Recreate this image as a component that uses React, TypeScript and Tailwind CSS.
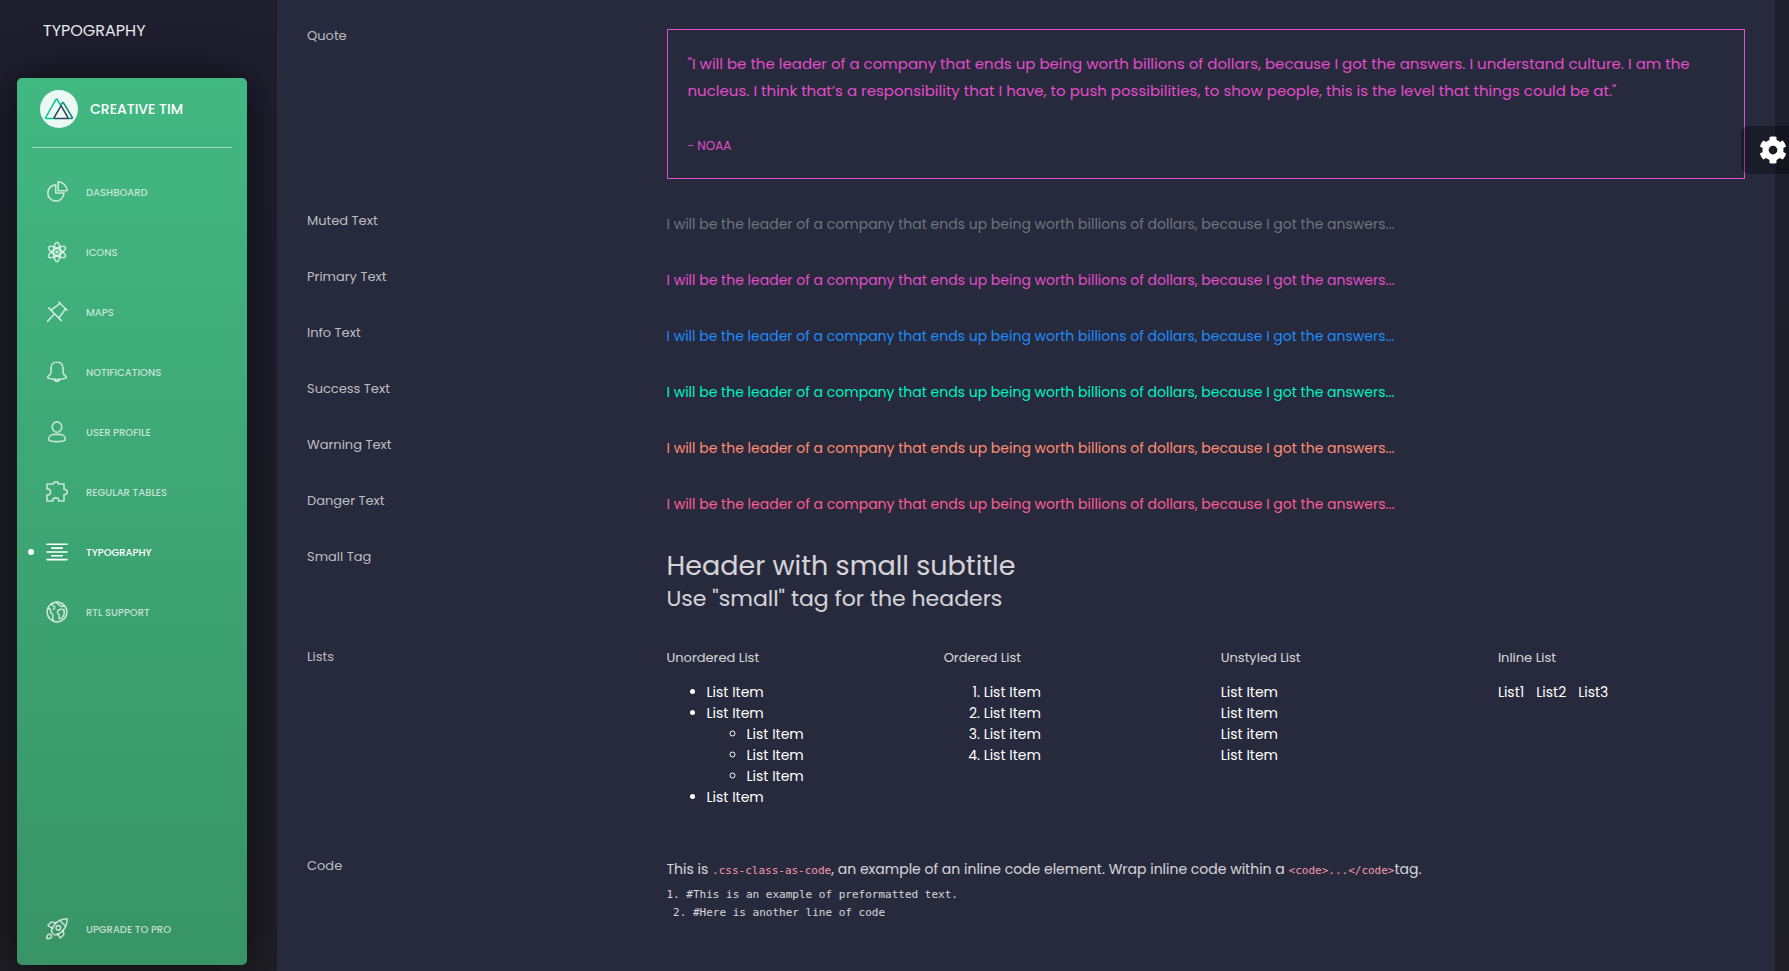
import type { ReactNode } from "react";
import clsx from "clsx";
import { FaCog } from "react-icons/fa";

const sample =
  "I will be the leader of a company that ends up being worth billions of dollars, because I got the answers...";

const icons: Record<string, ReactNode> = {
  dashboard: (
    <>
      <path d="M9.7 3.9A8.1 8.1 0 1 0 18 12H9.7Z" />
      <path d="M12.1.9v8.8h9A9 9 0 0 0 12.1.9Z" />
    </>
  ),
  atom: (
    <>
      <ellipse cx="11" cy="11" rx="3.5" ry="9.6" />
      <ellipse cx="11" cy="11" rx="3.5" ry="9.6" transform="rotate(60 11 11)" />
      <ellipse cx="11" cy="11" rx="3.5" ry="9.6" transform="rotate(-60 11 11)" />
      <circle cx="11" cy="11" r="1" />
    </>
  ),
  pin: (
    <>
      <path d="M12.7 1 21 9.2" />
      <path d="M14.2 2.4 5.2 9M19.5 7.8 12.9 17" />
      <path d="M2.6 6.8 15.3 19.6" />
      <path d="M8.4 13 1.6 20.4" />
    </>
  ),
  bell: (
    <>
      <path d="M11 1C7.2 1 5 3.7 5 7.2v3.6c0 2.3-.9 3.2-2.7 4.4-.9.6-.8 1.6.3 2 4.7 1.6 12.1 1.6 16.8 0 1.1-.4 1.2-1.4.3-2-1.8-1.2-2.7-2.1-2.7-4.4V7.2C17 3.7 14.8 1 11 1Z" />
      <path d="M8.5 18.4c.3 1.4 1.3 2.1 2.5 2.1s2.2-.7 2.5-2.1" />
    </>
  ),
  user: (
    <>
      <ellipse cx="11" cy="6.1" rx="4.8" ry="5.2" />
      <path d="M2.8 18.3c0-3 2.3-4.9 5.2-4.9h6c2.9 0 5.2 1.9 5.2 4.9 0 .8-.4 1.2-1.1 1.4-3.9 1-10.3 1-14.2 0-.7-.2-1.100-.6-1.100-1.400Z" />
    </>
  ),
  puzzle: (
    <path
      strokeLinejoin="miter"
      d="M1 3h6.500c0-1.300 1-2.300 2.500-2.300S12.500 1.700 12.500 3H18v5.200c2 0 3.200 1.200 3.200 2.800S20 13.800 18 13.800V20h-5.100c0-1.900-1.300-3.100-3.100-3.100S6.700 18.100 6.700 20H1v-5.900c2.100 0 3.500-1.300 3.500-3.100S3.100 7.900 1 7.900Z"
    />
  ),
  align: <path d="M1 3.300h20M5.700 7.100h10.600M1 11h20M5.700 14.800h10.600M1 18.600h20" />,
  world: (
    <>
      <circle cx="11" cy="11" r="9.900" />
      <path d="M2 7.200c1.900.2 3 1.300 2.600 2.700-.4 1.500.4 2.100 1.500 2.700 1.200.7.900 2.200.6 3.500-.2 1 .3 2.200.4 3.800" />
      <path d="M5.600 2.800c.1 1.500 1.200 2 2.400 2.400 1.200.5.700 2.200-.5 3.100" />
      <path d="M10.500 1.200c.2 1.400 1.200 2 2.400 2.500 1.100.5 1.500 2.100 3.200 1.700l2-.5" />
      <path d="M17.900 8.700c-2.200-1-5.700-.5-6.400 1.800-.5 1.600.7 2.500 1.500 3.300.7.800-.5 2.400.2 3.600.8 1.300 3-.3 3.600-1.700.5-1.100 1.100-1.500 1.300-2.800.2-1.500.1-3.100-.2-4.200Z" />
    </>
  ),
  rocket: (
    <>
      <path d="M21.200.8c-5.100.2-9.400 1.800-12.200 5.200-1.900 2.300-2.900 4.500-3.500 6.400-.5 1.800 2.700 5 4.500 4.500 2.100-.6 4.500-1.700 6.500-3.800 3.300-3.400 4.700-7.200 4.700-12.300Z" />
      <path d="M9.700 4.800 5.300 4 2 7.300l4.300 3M17.200 12.300l.6 4.400-3.400 3.300-2.900-4" />
      <circle cx="12.300" cy="9.800" r="2.300" />
      <path d="M.9 20.800c-.1-2 .2-4.300 2.100-4.600 1.600-.2 2.800 1 2.600 2.500-.3 1.900-2.500 2.200-4.700 2.100Z" />
      <path d="M14.600 3.200 18.900 7.500" />
    </>
  ),
};

const links = [
  { name: "Dashboard", icon: "dashboard" },
  { name: "Icons", icon: "atom" },
  { name: "Maps", icon: "pin" },
  { name: "Notifications", icon: "bell" },
  { name: "User Profile", icon: "user" },
  { name: "Regular Tables", icon: "puzzle" },
  { name: "Typography", icon: "align", active: true },
  { name: "RTL Support", icon: "world" },
];

const colorRows = [
  { label: "Muted Text", className: "text-[#6c757d]" },
  { label: "Primary Text", className: "text-[#e14eca]" },
  { label: "Info Text", className: "text-[#1d8cf8]" },
  { label: "Success Text", className: "text-[#00f2c3]" },
  { label: "Warning Text", className: "text-[#ff8d72]" },
  { label: "Danger Text", className: "text-[#fd5d93]" },
];

function SidebarLink({
  name,
  icon,
  active,
}: {
  name: string;
  icon: string;
  active?: boolean;
}) {
  return (
    <a
      href="#"
      className={clsx(
        "relative flex h-[60px] items-center gap-[18px] pl-[29px] text-[10px] font-medium uppercase",
        active ? "text-white" : "text-white/70"
      )}
    >
      {active && (
        <span className="absolute left-[11px] size-1.5 rounded-full bg-white" />
      )}
      <svg
        className="size-[22px] shrink-0"
        viewBox="0 0 22 22"
        fill="none"
        stroke="currentColor"
        strokeWidth="1.6"
        strokeLinecap="round"
        strokeLinejoin="round"
        aria-hidden="true"
      >
        {icons[icon]}
      </svg>
      {name}
    </a>
  );
}

function Logo() {
  return (
    <svg className="size-[38px]" viewBox="0 0 38 38" fill="none" aria-hidden="true">
      <circle cx="19" cy="19" r="19" fill="#ebf8f3" />
      <g strokeWidth="1.5" strokeLinejoin="round" strokeLinecap="round">
        <path
          d="M14 28.6H6.300c-.6 0-.9-.6-.6-1.100L15.900 9.600c.4-.7 1-.7 1.400 0L20.800 15.700"
          stroke="#00c58e"
        />
        <path
          d="M28 28.600h3.700c.6 0 .9-.6.600-1.100L23.500 12.900c-.4-.7-1-.7-1.400 0L20.800 15.200"
          stroke="#108775"
        />
        <path
          d="M14.800 28.600h12.500c.6 0 .9-.6.600-1.100L21.600 16.700c-.3-.5-.8-.5-1.100 0L14.200 27.500c-.3.500 0 1.100.6 1.100Z"
          stroke="#2f495e"
        />
      </g>
    </svg>
  );
}

function Sidebar() {
  return (
    <div className="flex w-[277px] shrink-0 flex-col pr-[30px] pb-1.5 pl-[17px]">
      <header className="flex h-[78px] items-start pt-[19px] pl-[26px]">
        <a href="#" className="text-base leading-6 text-white/90 uppercase">
          Typography
        </a>
      </header>
      <aside className="flex flex-1 flex-col rounded-[5px] bg-linear-to-b from-[#42b883] to-[#389466] pt-3 pb-1.5 shadow-[0_0_45px_0_rgba(0,0,0,0.6)]">
        <a
          href="#"
          className="flex items-center gap-3 pl-[23px] text-sm font-medium text-white uppercase"
        >
          <Logo />
          Creative Tim
        </a>
        <hr className="mx-[15px] mt-[19px] mb-3.5 border-white/50" />
        <nav className="flex flex-1 flex-col">
          {links.map((link) => (
            <SidebarLink key={link.name} {...link} />
          ))}
          <div className="mt-auto">
            <SidebarLink name="Upgrade to Pro" icon="rocket" />
          </div>
        </nav>
      </aside>
    </div>
  );
}

function Row({ label, children }: { label: string; children: ReactNode }) {
  return (
    <div className="grid grid-cols-[1fr_3fr]">
      <p className="text-[13px] leading-[26px] text-white/70">{label}</p>
      <div className="min-w-0 pt-[5px]">{children}</div>
    </div>
  );
}

function ListColumn({ title, children }: { title: string; children: ReactNode }) {
  return (
    <div>
      <h5 className="mb-[15px] text-[13px] leading-[18px] text-white/80">{title}</h5>
      {children}
    </div>
  );
}

export default function App() {
  return (
    <div className="flex min-h-screen bg-linear-to-b from-[#1e1e2f] to-[#1e1e24] font-[Poppins,Inter,sans-serif]">
      <Sidebar />
      <main className="mr-3.5 flex flex-1 flex-col gap-[29px] bg-[#27293d] px-[30px] pt-[23px] pb-12">
        <Row label="Quote">
          <blockquote className="mt-px border border-[#e14eca] p-5 text-[#e14eca]">
            <p className="text-[15px] leading-[27px]">
              "I will be the leader of a company that ends up being worth
              billions of dollars, because I got the answers. I understand
              culture. I am the nucleus. I think that’s a responsibility that I
              have, to push possibilities, to show people, this is the level
              that things could be at."
            </p>
            <small className="mt-[30px] block text-xs leading-6">- NOAA</small>
          </blockquote>
        </Row>
        {colorRows.map((row) => (
          <Row key={row.label} label={row.label}>
            <p className={clsx("text-sm leading-[22px]", row.className)}>
              {sample}
            </p>
          </Row>
        ))}
        <Row label="Small Tag">
          <h2 className="text-[27px] leading-[34px] text-white/80">
            Header with small subtitle
            <small className="block text-[22px] leading-8">
              Use "small" tag for the headers
            </small>
          </h2>
        </Row>
        <Row label="Lists">
          <div className="mb-4 grid grid-cols-4 gap-x-[30px] text-sm leading-[21px] text-white">
            <ListColumn title="Unordered List">
              <ul className="list-disc pl-10">
                <li>List Item</li>
                <li>
                  List Item
                  <ul className="list-[circle] pl-10">
                    <li>List Item</li>
                    <li>List Item</li>
                    <li>List Item</li>
                  </ul>
                </li>
                <li>List Item</li>
              </ul>
            </ListColumn>
            <ListColumn title="Ordered List">
              <ol className="list-decimal pl-10">
                <li>List Item</li>
                <li>List Item</li>
                <li>List item</li>
                <li>List Item</li>
              </ol>
            </ListColumn>
            <ListColumn title="Unstyled List">
              <ul>
                <li>List Item</li>
                <li>List Item</li>
                <li>List item</li>
                <li>List Item</li>
              </ul>
            </ListColumn>
            <ListColumn title="Inline List">
              <ul className="flex gap-3">
                <li>List1</li>
                <li>List2</li>
                <li>List3</li>
              </ul>
            </ListColumn>
          </div>
        </Row>
        <Row label="Code">
          <p className="text-sm leading-[22px] text-white/80">
            This is{" "}
            <code className="font-['DejaVu_Sans_Mono',monospace] text-[11px] text-[#f79aaf]">
              .css-class-as-code
            </code>
            , an example of an inline code element. Wrap inline code within a{" "}
            <code className="font-['DejaVu_Sans_Mono',monospace] text-[11px] text-[#f79aaf]">
              {"<code>...</code>"}
            </code>
            tag.
          </p>
          <pre className="mt-1 font-['DejaVu_Sans_Mono',monospace] text-[11px] leading-[18px] text-white/80">
            {"1. #This is an example of preformatted text.\n 2. #Here is another line of code"}
          </pre>
        </Row>
      </main>
      <button
        type="button"
        aria-label="Settings"
        className="fixed top-[126px] right-0 flex size-12 items-center justify-end rounded-l-lg bg-black/30 pr-0.5 text-white"
      >
        <FaCog className="size-7" />
      </button>
    </div>
  );
}
